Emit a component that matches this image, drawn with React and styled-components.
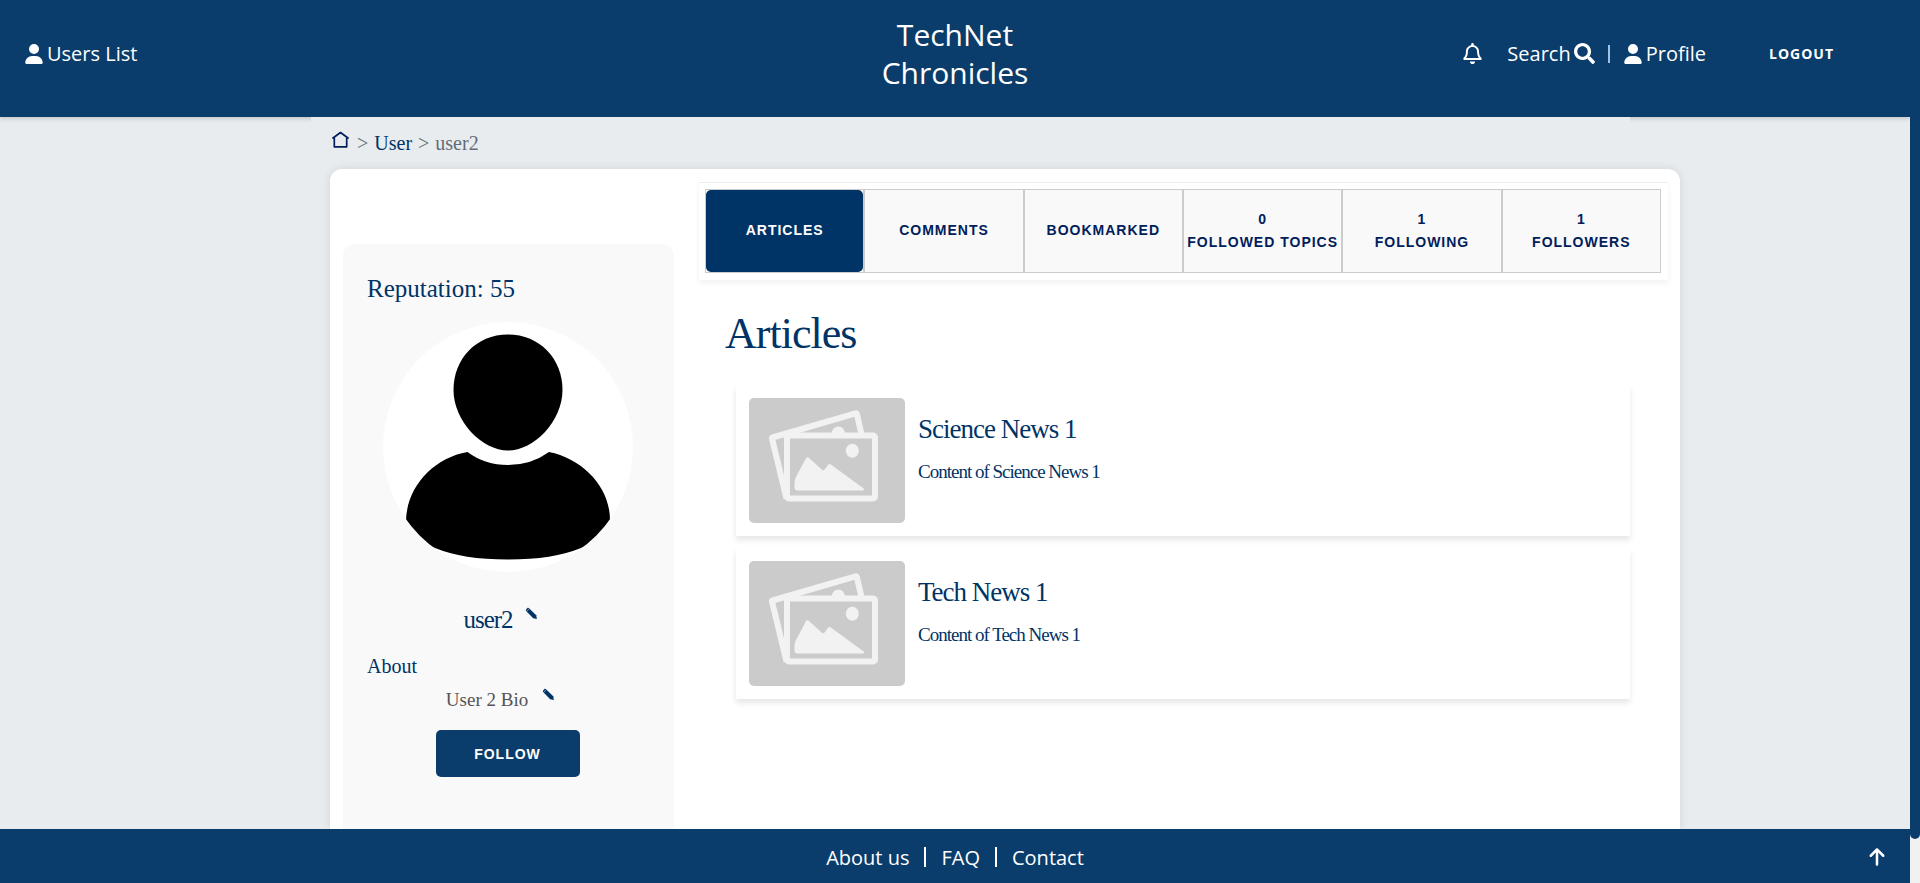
import React from "react";
import styled, { createGlobalStyle } from "styled-components";
import { FaSearch, FaRegBell } from "react-icons/fa";
import { FaUser, FaArrowUp } from "react-icons/fa6";

const navy = "#0a3d6b";
const ink = "#003366";
const sans = '"Open Sans", "Noto Sans", sans-serif';
const serif = '"Liberation Serif", "Times New Roman", serif';
const grotesk = '"Liberation Sans", Arial, sans-serif';

const GlobalStyle = createGlobalStyle`
  *, *::before, *::after { box-sizing: border-box; }
  body { margin: 0; background: #e8ecef; font-family: ${serif}; color: ${ink}; }
  a { color: inherit; text-decoration: none; }
  button { cursor: pointer; }
`;

const Screen = styled.div`
  display: grid;
  grid-template-columns: minmax(0, 1fr) 10px;
  min-height: 100vh;
`;

const Page = styled.div`
  display: flex;
  flex-direction: column;
`;

const ScrollTrack = styled.div`
  background: #f1f1f1;
`;

const ScrollThumb = styled.div`
  height: 95%;
  border-radius: 0 0 5px 5px;
  background: ${navy};
`;

const Header = styled.header`
  display: grid;
  grid-template-columns: 1fr auto 1fr;
  align-items: center;
  height: 117px;
  padding: 0 76px 10px 24px;
  background: ${navy};
  box-shadow: 0 2px 4px rgba(0, 0, 0, 0.15);
  color: #fff;
  font-family: ${sans};
  font-size: 20px;
`;

const Brand = styled.a`
  width: 160px;
  margin-left: 52px;
  font-size: 30px;
  line-height: 38px;
  text-align: center;
`;

const HeaderNav = styled.nav`
  display: flex;
  align-items: center;
  justify-content: flex-end;
`;

const IconLink = styled.a`
  display: inline-flex;
  align-items: center;
  justify-self: start;
  gap: 3px;
  margin-right: ${(p) => p.$after || 0}px;
`;

const Divider = styled.span`
  width: ${(p) => p.$width || 1}px;
  height: ${(p) => p.$height}px;
  margin: 0 ${(p) => p.$gap}px;
  background: ${(p) => p.$color || "#fff"};
`;

const LogoutButton = styled.button`
  margin-left: 63px;
  padding: 0;
  border: 0;
  background: none;
  color: #fff;
  font: 700 14px ${sans};
  letter-spacing: 1px;
`;

const Main = styled.main`
  flex: 1;
  display: flex;
  flex-direction: column;
  padding: 0 230px 0 311px;
`;

const Breadcrumb = styled.nav`
  display: flex;
  align-items: center;
  gap: 6px;
  height: 52px;
  margin-right: 50px;
  padding-left: 21px;
  background: #e8ecef;
  color: #606c76;
  font-size: 20px;
  svg { display: block; margin: 0 2px 8px 0; }
  a { color: ${ink}; }
`;

const Card = styled.div`
  flex: 1;
  display: flex;
  align-items: stretch;
  gap: 25px;
  margin-left: 19px;
  padding: 13px 12px 0 13px;
  border-radius: 12px 12px 0 0;
  background: #fff;
  box-shadow: 0 0 10px rgba(0, 0, 0, 0.1);
`;

const Sidebar = styled.aside`
  display: flex;
  flex-direction: column;
  align-items: center;
  width: 331px;
  flex: none;
  margin-top: 62px;
  padding: 25px 26px 25px 24px;
  border-radius: 12px 12px 0 0;
  background: #f9f9f9;
`;

const Reputation = styled.p`
  align-self: flex-start;
  margin: 4px 0 18px;
  font-size: 25px;
  line-height: 31px;
`;

const NameRow = styled.div`
  display: flex;
  gap: 12px;
  margin: 30px 0 18px;
  padding-right: 14px;
`;

const UserName = styled.h2`
  margin: 0;
  font-size: 25px;
  font-weight: 400;
  line-height: 36px;
  letter-spacing: -1px;
`;

const AboutLabel = styled.h3`
  align-self: flex-start;
  margin: 0;
  font-size: 20px;
  font-weight: 400;
  line-height: 20px;
`;

const BioRow = styled.div`
  display: flex;
  gap: 14px;
  margin: 12px 0 18px;
  padding-right: 14px;
  color: #555;
`;

const Bio = styled.p`
  margin: 0;
  font-size: 19px;
  line-height: 24px;
`;

const EditButton = styled.button`
  align-self: flex-start;
  margin-top: ${(p) => p.$drop || 0}px;
  padding: 0;
  border: 0;
  background: none;
  svg { display: block; }
`;

const FollowButton = styled.button`
  width: 144px;
  height: 47px;
  border: 0;
  border-radius: 5px;
  background: ${navy};
  color: #fff;
  font: 700 14px ${grotesk};
  letter-spacing: 1px;
`;

const Content = styled.section`
  flex: 1;
  min-width: 0;
`;

const Tabs = styled.div`
  display: flex;
  padding: 6px 7px 7px 6px;
  border-top: 1px solid #eee;
  box-shadow: 0 3px 6px rgba(0, 0, 0, 0.06);
`;

const TabCell = styled.div`
  flex: 1 1 0;
  height: 84px;
  border: 1px solid #ccc;
  background: ${(p) => (p.$active ? "#fff" : "#f9f9f9")};
`;

const TabButton = styled.button`
  width: 100%;
  height: 100%;
  padding: 0 0 1px;
  border: 0;
  border-radius: 5px;
  background: ${(p) => (p.$active ? ink : "transparent")};
  color: ${(p) => (p.$active ? "#fff" : "#00205b")};
  font: 700 14px/23px ${grotesk};
  letter-spacing: 1px;
  white-space: nowrap;
  span { display: block; }
`;

const ContentTitle = styled.h1`
  margin: 27px 0 24px 26px;
  font-size: 44px;
  font-weight: 400;
  line-height: 54px;
  letter-spacing: -1px;
`;

const ArticleList = styled.div`
  display: flex;
  flex-direction: column;
  gap: 12px;
  padding: 0 38px 0 37px;
`;

const ArticleCard = styled.article`
  display: flex;
  gap: 13px;
  height: 151px;
  padding: 13px;
  background: #fff;
  box-shadow: 0 4px 6px rgba(0, 0, 0, 0.1);
`;

const ArticleText = styled.div`
  padding-top: 14px;
  letter-spacing: -1px;
  h2 {
    margin: 0 0 14px;
    font-size: 27px;
    font-weight: 400;
    line-height: 34px;
  }
  p {
    margin: 0;
    font-size: 19px;
    line-height: 24px;
  }
`;

const Footer = styled.footer`
  display: grid;
  grid-template-columns: 1fr auto 1fr;
  align-items: center;
  height: 54px;
  padding: 2px 23px 0;
  background: ${navy};
  color: #fff;
  font-family: ${sans};
  font-size: 20px;
`;

const FooterLinks = styled.nav`
  grid-column: 2;
  display: flex;
  align-items: center;
`;

const TopLink = styled.a`
  justify-self: end;
  display: flex;
`;

const HomeIcon = () => (
  <svg width="17" height="17" viewBox="0 0 17 17" fill="none" stroke="#00205b" strokeWidth="1.7" strokeLinecap="round" strokeLinejoin="round" aria-hidden="true">
    <path d="M1 7 8.500 1.500 16 7M2.300 6V15.800H14.700V6" />
  </svg>
);

const PencilIcon = () => (
  <svg width="13" height="13" viewBox="0 0 13 13" aria-hidden="true">
    <path d="M2.600.8Q3.200.6 3.800 1.100L11.200 8.200 11.900 11.900 8.200 11.200 1.100 4Q.7 3.400 1 2.800Z" fill={ink} />
    <path d="M1.600 4.500 4.200 1.700" stroke="#f9f9f9" strokeWidth=".5" />
  </svg>
);

const Avatar = () => (
  <svg width="250" height="250" viewBox="0 0 250 250" role="img" aria-label="user2">
    <defs>
      <clipPath id="avatar-round"><circle cx="125" cy="125" r="125" /></clipPath>
    </defs>
    <g clipPath="url(#avatar-round)">
      <rect width="250" height="250" fill="#fff" />
      <path d="M125 12.500C157 12.500 179.500 37 179.500 68 179.500 99 151 128.500 125 128.500S70.500 99 70.500 68C70.500 37 93 12.500 125 12.500Z" />
      <path d="M84.500 130Q102 143 125 143T166 130C200 137 227 165 227 198V216L198 226Q170 237.500 125 237.500T52 226L23 216V198C24 165 50 136 84.500 130Z" />
    </g>
  </svg>
);

const ThumbSvg = styled.svg`
  flex: none;
  border-radius: 5px;
  background: #cbcbcb;
`;

const Thumbnail = () => (
  <ThumbSvg width="156" height="125" viewBox="0 0 156 125" aria-hidden="true">
    <path d="M37.500 100.500 23 40.500Q22.700 39.700 23.600 39.500L106.500 15.300Q107.500 15 107.800 16L112.500 36" fill="none" stroke="#f2f2f2" strokeWidth="6" strokeLinejoin="round" />
    <circle cx="89.300" cy="35" r="6.500" fill="#f2f2f2" />
    <rect x="38" y="37.500" width="88" height="63" rx="2" fill="#cbcbcb" stroke="#f2f2f2" strokeWidth="6" />
    <ellipse cx="103.300" cy="52.700" rx="6.500" ry="7" fill="#f2f2f2" />
    <path d="M56.800 60.500Q58.500 58.200 60.500 60.500L73 71.700Q74.500 73 75.600 71.500L79 67Q80.500 65 82.500 67L115 90.800 114.500 92.500H48.500Q45.500 92.500 45.500 89.500V85Q45.500 82 47 79Z" fill="#f2f2f2" />
  </ThumbSvg>
);

const tabs = [
  { label: "ARTICLES", active: true },
  { label: "COMMENTS" },
  { label: "BOOKMARKED" },
  { label: "FOLLOWED TOPICS", count: 0 },
  { label: "FOLLOWING", count: 1 },
  { label: "FOLLOWERS", count: 1 },
];

const articles = [
  { title: "Science News 1", text: "Content of Science News 1" },
  { title: "Tech News 1", text: "Content of Tech News 1" },
];

export default function App() {
  return (
    <>
      <GlobalStyle />
      <Screen>
        <Page>
          <Header>
            <IconLink href="#users"><FaUser size={20} />Users List</IconLink>
            <Brand href="#home">TechNet Chronicles</Brand>
            <HeaderNav>
              <IconLink href="#notifications" aria-label="Notifications" $after={24}><FaRegBell size={21} /></IconLink>
              <IconLink href="#search">Search<FaSearch size={21} /></IconLink>
              <Divider $height={18} $gap={13} $width={2} $color="#9cc4e4" />
              <IconLink href="#profile"><FaUser size={20} />Profile</IconLink>
              <LogoutButton type="button">LOGOUT</LogoutButton>
            </HeaderNav>
          </Header>
          <Main>
            <Breadcrumb aria-label="Breadcrumb">
              <a href="#home" aria-label="Home"><HomeIcon /></a>
              <span>&gt;</span>
              <a href="#user">User</a>
              <span>&gt;</span>
              <span>user2</span>
            </Breadcrumb>
            <Card>
              <Sidebar>
                <Reputation>Reputation: 55</Reputation>
                <Avatar />
                <NameRow>
                  <UserName>user2</UserName>
                  <EditButton type="button" aria-label="Edit name" $drop={5}><PencilIcon /></EditButton>
                </NameRow>
                <AboutLabel>About</AboutLabel>
                <BioRow>
                  <Bio>User 2 Bio</Bio>
                  <EditButton type="button" aria-label="Edit bio"><PencilIcon /></EditButton>
                </BioRow>
                <FollowButton type="button">FOLLOW</FollowButton>
              </Sidebar>
              <Content>
                <Tabs>
                  {tabs.map((t) => (
                    <TabCell key={t.label} $active={t.active}>
                      <TabButton type="button" $active={t.active}>
                        {t.count !== undefined && <span>{t.count}</span>}
                        <span>{t.label}</span>
                      </TabButton>
                    </TabCell>
                  ))}
                </Tabs>
                <ContentTitle>Articles</ContentTitle>
                <ArticleList>
                  {articles.map((a) => (
                    <ArticleCard key={a.title}>
                      <Thumbnail />
                      <ArticleText>
                        <h2>{a.title}</h2>
                        <p>{a.text}</p>
                      </ArticleText>
                    </ArticleCard>
                  ))}
                </ArticleList>
              </Content>
            </Card>
          </Main>
          <Footer>
            <FooterLinks>
              <a href="#about">About us</a>
              <Divider $height={20} $gap={15} $width={2} />
              <a href="#faq">FAQ</a>
              <Divider $height={20} $gap={15} $width={2} />
              <a href="#contact">Contact</a>
            </FooterLinks>
            <TopLink href="#top" aria-label="Back to top"><FaArrowUp size={20} /></TopLink>
          </Footer>
        </Page>
        <ScrollTrack><ScrollThumb /></ScrollTrack>
      </Screen>
    </>
  );
}
